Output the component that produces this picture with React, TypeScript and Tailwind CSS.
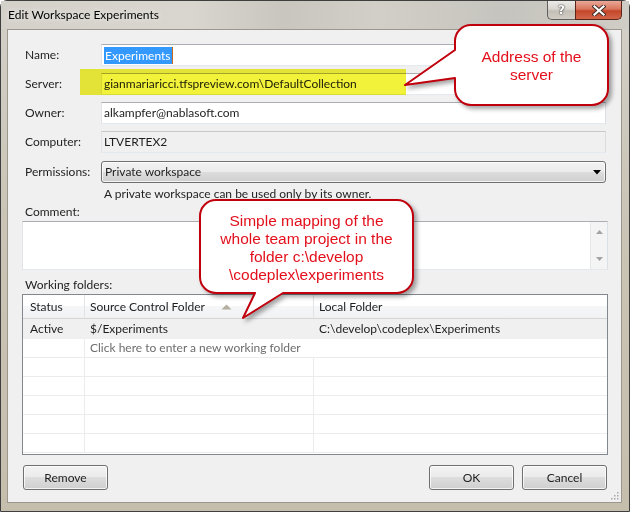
import React from "react"

const BTN =
    "h-[25px] w-[85px] flex items-center justify-center rounded-[3px] border border-[#707070] bg-[linear-gradient(to_bottom,#f2f2f2,#ebebeb_50%,#dddddd_50%,#cfcfcf)] shadow-[inset_0_0_0_1px_rgba(255,255,255,0.75)]"

const TEXTBOX =
    "h-[22px] flex items-center border border-[#abadb3] border-l-[#e2e3ea] border-r-[#dbdfe6] border-b-[#e3e9ef] pl-[2px]"

function Label({ children }: { children: React.ReactNode }) {
    return <div className="h-[22px] flex items-center">{children}</div>
}

function TitleBar() {
    return (
        <div className="h-[28px] flex items-start justify-between pl-[7px] pr-[7px] bg-[linear-gradient(to_right,#d4d1ca,#d9d6cf_30%,#c9c6bf_45%,#d2cfc8_60%,#c6c4be_80%,#d0cdc6)]">
            <div className="pt-[6px] leading-[16px] text-[12px] text-black [text-shadow:0_0_6px_rgba(255,255,255,0.9)]">
                Edit Workspace Experiments
            </div>
            <div className="flex">
                <div className="w-[28px] h-[19px] rounded-bl-[5px] border border-t-0 border-r-0 border-[#5f5f5f] bg-[linear-gradient(to_bottom,#ecebe8,#d9d6d0_45%,#c3bfb7_55%,#d1cdc5)] flex items-center justify-center">
                    <span className="font-['DejaVu_Sans',sans-serif] font-bold text-[12px] leading-none text-white [text-shadow:0_0_2px_#333,0_0_1px_#333]">?</span>
                </div>
                <div className="w-[47px] h-[19px] rounded-br-[5px] border border-t-0 border-[#5a2418] bg-[linear-gradient(to_bottom,#eaa898,#d9765d_45%,#c4462a_55%,#d1664a)] flex items-center justify-center">
                    <svg width="14" height="11" viewBox="0 0 14 11">
                        <path d="M2.5 1.5 L11.5 9.5 M11.5 1.5 L2.5 9.5" stroke="#3a2a26" strokeWidth="4" strokeLinecap="square" />
                        <path d="M2.5 1.5 L11.5 9.5 M11.5 1.5 L2.5 9.5" stroke="#ffffff" strokeWidth="2.2" strokeLinecap="square" />
                    </svg>
                </div>
            </div>
        </div>
    )
}

function FoldersTable() {
    const empty = [0, 1, 2, 3, 4]
    return (
        <div className="ml-[14px] mr-[13px] mt-[1px] h-[161px] overflow-hidden border border-[#828790] bg-white">
            {/* Header */}
            <div className="h-[24px] flex border-b border-[#d5d5d5] bg-[linear-gradient(to_bottom,#ffffff,#ffffff_50%,#f5f6f7_50%,#f1f2f4)]">
                <div className="w-[62px] shrink-0 border-r border-[#e3e4e6] pl-[7px] flex items-center">Status</div>
                <div className="w-[229px] shrink-0 border-r border-[#e3e4e6] pl-[5px] flex items-center">
                    Source Control Folder
                    <svg className="ml-[16px]" width="11" height="6" viewBox="0 0 11 6">
                        <path d="M5.5 0.5 L10.5 5.5 L0.5 5.5 Z" fill="#b3ae9e" />
                    </svg>
                </div>
                <div className="flex-1 pl-[5px] flex items-center">Local Folder</div>
            </div>
            {/* Rows */}
            <div className="h-[20px] flex border-b border-[#f0f0f0] bg-[#f0f0f0]">
                <div className="w-[62px] shrink-0 border-r border-[#f0f0f0] pl-[7px] flex items-center">Active</div>
                <div className="w-[229px] shrink-0 border-r border-[#f0f0f0] pl-[5px] flex items-center">$/Experiments</div>
                <div className="flex-1 pl-[5px] flex items-center">C:\develop\codeplex\Experiments</div>
            </div>
            <div className="h-[19px] flex border-b border-[#ececec]">
                <div className="w-[62px] shrink-0 border-r border-[#ececec]" />
                <div className="flex-1 pl-[5px] flex items-center text-[#6d6d6d] whitespace-nowrap">
                    Click here to enter a new working folder
                </div>
            </div>
            {empty.map((i) => (
                <div key={i} className="h-[19px] flex border-b border-[#ececec]">
                    <div className="w-[62px] shrink-0 border-r border-[#ececec]" />
                    <div className="w-[229px] shrink-0 border-r border-[#ececec]" />
                    <div className="flex-1" />
                </div>
            ))}
        </div>
    )
}

function Callouts() {
    return (
        <>
            {/* Address of the server */}
            <div className="absolute left-[395px] top-[18px] w-[225px] h-[100px]">
                <svg className="absolute inset-0 drop-shadow-[3px_3px_2px_rgba(0,0,0,0.35)]" width="225" height="100" viewBox="0 0 225 100">
                    <path
                        d="M76 7 H197 A16 16 0 0 1 213 23 V71 A16 16 0 0 1 197 87 H76 A16 16 0 0 1 60 71 V60 L10 67 L60 32 V23 A16 16 0 0 1 76 7 Z"
                        fill="#ffffff"
                        stroke="#c0000c"
                        strokeWidth="2"
                        strokeLinejoin="round"
                    />
                </svg>
                <div className="absolute left-[60px] top-[30px] w-[153px] text-center font-['Liberation_Sans',Arial,sans-serif] text-[15.5px] leading-[18px] text-[#e3101c]">
                    Address of the<br />server
                </div>
            </div>
            {/* Simple mapping */}
            <div className="absolute left-[190px] top-[192px] w-[235px] h-[135px]">
                <svg className="absolute inset-0 drop-shadow-[3px_3px_2px_rgba(0,0,0,0.35)]" width="235" height="135" viewBox="0 0 235 135">
                    <path
                        d="M26 8 H207 A16 16 0 0 1 223 24 V85 A16 16 0 0 1 207 101 H93 L53 126 L65 101 H26 A16 16 0 0 1 10 85 V24 A16 16 0 0 1 26 8 Z"
                        fill="#ffffff"
                        stroke="#c0000c"
                        strokeWidth="2"
                        strokeLinejoin="round"
                    />
                </svg>
                <div className="absolute left-[10px] top-[20px] w-[213px] text-center font-['Liberation_Sans',Arial,sans-serif] text-[15.5px] leading-[18px] text-[#e3101c]">
                    Simple mapping of the<br />
                    whole team project in the<br />
                    folder c:\develop<br />
                    \codeplex\experiments
                </div>
            </div>
        </>
    )
}

export default function App() {
    return (
        <div className="relative w-[630px] h-[512px] overflow-hidden bg-white font-['Lato','Noto_Sans',sans-serif] text-[12px] text-[#1e1e1e]">
            <div className="flex h-full flex-col rounded-t-[7px] border border-[#3f3f3f] bg-[linear-gradient(to_bottom,#d3d0c9,#cbc5b7_40%,#c6bead)]">
                <TitleBar />

                <div className="flex-1 flex pl-[6px] pr-[7px]">
                    {/* Client area */}
                    <div className="relative flex-1 flex flex-col border border-[#9c978c] bg-[#f0f0f0]">
                        {/* Fields */}
                        <div className="pt-[14px] pl-[17px] pr-[15px] grid grid-cols-[76px_505px] gap-y-[7px]">
                            <Label>Name:</Label>
                            <div className={`${TEXTBOX} border-[#5b9bd5] border-l-[#b5cfe7] border-r-[#b5cfe7] border-b-[#c5daed] bg-white`}>
                                <span className="bg-[#3399ff] text-white leading-[17px] px-[1px]">Experiments</span>
                                <span className="w-[1px] h-[17px] bg-[#c86a1e]" />
                            </div>

                            <Label>Server:</Label>
                            <div className={`${TEXTBOX} bg-white`}>gianmariaricci.tfspreview.com\DefaultCollection</div>

                            <Label>Owner:</Label>
                            <div className={`${TEXTBOX} bg-white`}>alkampfer@nablasoft.com</div>

                            <Label>Computer:</Label>
                            <div className={`${TEXTBOX} border-[#c9c9c9] border-l-[#dcdcdc] border-r-[#dcdcdc] border-b-[#e3e3e3] bg-[#f0f0f0]`}>LTVERTEX2</div>

                            <div className="mt-[1px]"><Label>Permissions:</Label></div>
                            <div className="mt-[1px] h-[22px] flex items-center justify-between rounded-[3px] border border-[#707070] bg-[linear-gradient(to_bottom,#f2f2f2,#ebebeb_50%,#dddddd_50%,#cfcfcf)] shadow-[inset_0_0_0_1px_rgba(255,255,255,0.75)] pl-[3px] pr-[4px]">
                                <span>Private workspace</span>
                                <svg width="8" height="5" viewBox="0 0 8 5">
                                    <path d="M0 0 H8 L4 4.5 Z" fill="#000" />
                                </svg>
                            </div>
                        </div>

                        <div className="mt-[3px] pl-[96px] leading-[16px]">A private workspace can be used only by its owner.</div>

                        <div className="mt-[2px] pl-[17px] leading-[16px]">Comment:</div>

                        {/* Comment box */}
                        <div className="ml-[14px] mr-[13px] mt-[1px] h-[49px] flex border border-[#abadb3] border-l-[#e2e3ea] border-r-[#dbdfe6] border-b-[#e3e9ef] bg-white">
                            <div className="flex-1" />
                            <div className="w-[17px] flex flex-col items-center justify-between py-[8px] bg-[#f4f4f4] border-l border-[#e8e8e8]">
                                <svg width="7" height="4" viewBox="0 0 7 4"><path d="M3.5 0 L7 4 H0 Z" fill="#a3a3a3" /></svg>
                                <svg width="7" height="4" viewBox="0 0 7 4"><path d="M0 0 H7 L3.5 4 Z" fill="#a3a3a3" /></svg>
                            </div>
                        </div>

                        <div className="mt-[7px] pl-[17px] leading-[16px]">Working folders:</div>

                        <FoldersTable />

                        {/* Buttons */}
                        <div className="mt-[10px] pl-[15px] pr-[14px] flex items-center">
                            <div className={BTN}>Remove</div>
                            <div className="flex-1" />
                            <div className={`${BTN} border-[#3c7fb1] shadow-[inset_0_0_0_1px_#8fdcf7]`}>OK</div>
                            <div className={`${BTN} ml-[8px]`}>Cancel</div>
                        </div>

                        {/* Resize grip */}
                        <svg className="absolute right-[2px] bottom-[2px]" width="9" height="9" viewBox="0 0 9 9">
                            {[
                                [7, 1], [7, 4], [4, 4], [7, 7], [4, 7], [1, 7],
                            ].map(([x, y], i) => (
                                <rect key={i} x={x} y={y} width="1.5" height="1.5" fill="#a8a8a8" />
                            ))}
                        </svg>
                    </div>
                </div>

                <div className="h-[8px]" />
            </div>

            {/* Highlighter over the server field */}
            <div className="absolute left-[80px] top-[69px] w-[326px] h-[26px] bg-[#f2f23a] mix-blend-multiply" />

            <Callouts />
        </div>
    )
}
